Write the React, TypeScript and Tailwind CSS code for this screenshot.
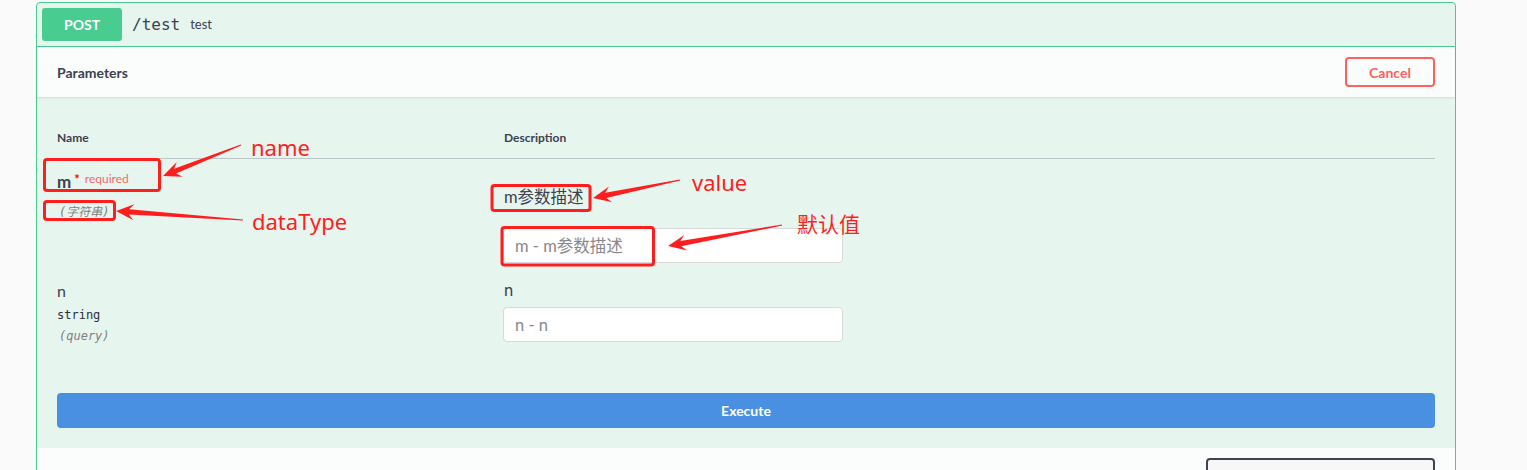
import React from "react";

const SANS = "font-['Lato','Noto_Sans_CJK_SC',sans-serif]";
const MONO = "font-['DejaVu_Sans_Mono','Noto_Sans_CJK_SC',monospace]";

// tapered screenshot-style arrow, tail -> tip
function arrowPoints(x1: number, y1: number, x2: number, y2: number) {
  const dx = x2 - x1;
  const dy = y2 - y1;
  const len = Math.hypot(dx, dy);
  const ux = dx / len;
  const uy = dy / len;
  const nx = -uy;
  const ny = ux;
  const pt = (d: number, w: number) =>
    `${(x1 + ux * d + nx * w).toFixed(1)},${(y1 + uy * d + ny * w).toFixed(1)}`;
  return [
    pt(0, 0.5),
    pt(len - 13, 2.6),
    pt(len - 18, 8),
    pt(len, 0),
    pt(len - 18, -8),
    pt(len - 13, -2.6),
    pt(0, -0.5),
  ].join(" ");
}

const arrows = [
  [241, 145, 163, 176],
  [243, 220, 116, 211],
  [680, 180, 593, 198],
  [782, 225, 668, 246],
];

const boxes = [
  { x: 44.5, y: 159.5, w: 115, h: 31 },
  { x: 44.5, y: 201.5, w: 70, h: 18 },
  { x: 492, y: 185.5, w: 98, h: 25 },
  { x: 502, y: 227.5, w: 151.5, h: 37.5 },
];

function Annotations() {
  return (
    <div className="pointer-events-none absolute inset-0">
      <svg width="1527" height="470" className="absolute left-0 top-0">
        {boxes.map((b, i) => (
          <rect
            key={i}
            x={b.x}
            y={b.y}
            width={b.w}
            height={b.h}
            rx="2.5"
            fill="none"
            stroke="#ff1e1e"
            strokeWidth="3"
          />
        ))}
        {arrows.map((a, i) => (
          <polygon key={i} points={arrowPoints(a[0], a[1], a[2], a[3])} fill="#ff1e1e" />
        ))}
      </svg>
      <span className="absolute left-[251px] top-[136px] font-['Noto_Sans',sans-serif] text-[22px] leading-[22px] text-[#ff1e1e]">
        name
      </span>
      <span className="absolute left-[252px] top-[210px] font-['Noto_Sans',sans-serif] text-[22px] leading-[22px] text-[#ff1e1e]">
        dataType
      </span>
      <span className="absolute left-[692px] top-[171px] font-['Noto_Sans',sans-serif] text-[22px] leading-[22px] text-[#ff1e1e]">
        value
      </span>
      <span className="absolute left-[797px] top-[212px] font-['Noto_Sans_CJK_SC',sans-serif] text-[21px] leading-[22px] text-[#ff1e1e]">
        默认值
      </span>
    </div>
  );
}

function ParamInput({ placeholder }: { placeholder: string }) {
  return (
    <input
      type="text"
      placeholder={placeholder}
      className={`-ml-[1px] h-[35px] w-[340px] rounded-[4px] border border-[#d9d9d9] bg-white px-[11px] text-[16.5px] text-[#3b4151] outline-none placeholder:text-[#888888] ${SANS}`}
    />
  );
}

export default function App() {
  return (
    <div className={`relative h-[470px] overflow-hidden bg-[#fafafa] pl-[36px] pt-[2px] text-[#3b4151] ${SANS}`}>
      <div className="w-[1420px] rounded-[4px] border border-[#49cc90] bg-[#49cc90]/10">
        {/* Summary */}
        <div className="flex items-center border-b border-[#49cc90] p-[5px]">
          <div className="flex h-[33px] w-[80px] items-center justify-center rounded-[3px] bg-[#49cc90] text-[14px] font-bold text-white">
            POST
          </div>
          <span className={`ml-[10px] text-[16px] ${MONO}`}>/test</span>
          <span className="ml-[10px] text-[13px]">test</span>
        </div>

        {/* Parameters header */}
        <div className="flex h-[50px] items-center justify-between bg-white/80 px-[20px] shadow-[0_1px_2px_rgba(0,0,0,0.1)]">
          <h4 className="text-[14px] font-bold">Parameters</h4>
          <button className="flex h-[30px] w-[90px] items-center justify-center rounded-[4px] border-2 border-[#ff6060] text-[14px] font-bold text-[#ff6060]">
            Cancel
          </button>
        </div>

        {/* Table */}
        <div className="px-[20px] pt-[33px]">
          <div className="grid grid-cols-[447px_1fr] border-b border-[#3b4151]/25 pb-[12px] text-[12px] font-bold leading-[16px]">
            <div>Name</div>
            <div>Description</div>
          </div>

          <div className="grid grid-cols-[447px_1fr]">
            <div className="pt-[13px]">
              <div className="text-[17px] font-bold leading-[20px]">
                m
                <span className="relative -top-[4px] ml-[3px] text-[13px] text-[#ff0000]">*</span>
                <span className="relative -top-[5px] ml-[5px] text-[12px] font-normal text-[#ff0000]/60">required</span>
              </div>
              <div className={`ml-[2px] mt-[10px] text-[12px] italic leading-[16px] text-[#808080] ${MONO}`}>(字符串)</div>
            </div>
            <div className="pt-[28px]">
              <div className="text-[16.5px] leading-[20px]">m参数描述</div>
              <div className="mt-[21px]">
                <ParamInput placeholder="m - m参数描述" />
              </div>
            </div>

            <div className="pt-[18px]">
              <div className="text-[16px] leading-[20px]">n</div>
              <div className={`mt-[6px] text-[12px] leading-[16px] text-[#2b303d] ${MONO}`}>string</div>
              <div className={`ml-[2px] mt-[5px] text-[12px] italic leading-[16px] text-[#808080] ${MONO}`}>(query)</div>
            </div>
            <div className="pt-[17px]">
              <div className="text-[16.5px] leading-[20px]">n</div>
              <div className="mt-[7px]">
                <ParamInput placeholder="n - n" />
              </div>
            </div>
          </div>

          <div className="pb-[20px] pt-[49px]">
            <button className="flex h-[35px] w-full items-center justify-center rounded-[4px] bg-[#4990e2] text-[14px] font-bold text-white">
              Execute
            </button>
          </div>
        </div>

        {/* Responses (cut off) */}
        <div className="flex h-[60px] justify-end bg-white/80 px-[20px] pt-[10px]">
          <div className="h-[40px] w-[229px] rounded-[4px] border-2 border-[#41444e] bg-[#f7f7f7]" />
        </div>
      </div>
      <Annotations />
    </div>
  );
}
